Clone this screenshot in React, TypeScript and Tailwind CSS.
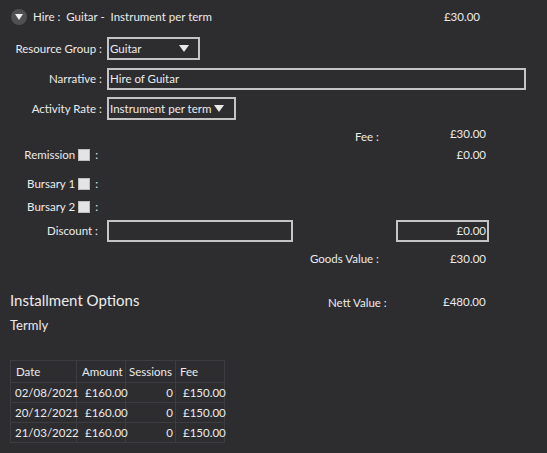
import React from "react"

const font = { fontFamily: 'Lato, "Noto Sans", sans-serif' }

function Caret() {
  return (
    <svg width="10" height="8" viewBox="0 0 10 8" className="shrink-0">
      <path d="M0 0 L10 0 L5 7 Z" fill="#e8e8e8" />
    </svg>
  )
}

function Check() {
  return <span className="mx-[3px] inline-block h-[12px] w-[12px] border border-[#bdbdbd] bg-[#e4e4e4]" />
}

function Label({ children }: { children: React.ReactNode }) {
  return <div className="flex w-[103px] shrink-0 items-center justify-end whitespace-nowrap pr-[1px]">{children}</div>
}

const rows = [
  ["02/08/2021", "£160.00", "0", "£150.00"],
  ["20/12/2021", "£160.00", "0", "£150.00"],
  ["21/03/2022", "£160.00", "0", "£150.00"],
]

export default function App() {
  return (
    <div className="h-[453px] w-[547px] overflow-hidden whitespace-nowrap bg-[#2d2d30] text-[11.5px] text-[#ebebeb]" style={font}>
      {/* header */}
      <div className="mt-[8px] flex h-[18px] items-center">
        <div className="ml-[11px] flex h-[16px] w-[16px] items-center justify-center rounded-full bg-[#505053]">
          <svg width="8" height="6" viewBox="0 0 8 6">
            <path d="M0 0 L8 0 L4 6 Z" fill="#f0f0f0" />
          </svg>
        </div>
        <span className="ml-[6px] w-[400px]">Hire :&nbsp; Guitar -&nbsp; Instrument per term</span>
        <span className="w-[47px] text-right">£30.00</span>
      </div>

      {/* resource group */}
      <div className="mt-[11px] flex h-[23px] items-center">
        <Label>Resource Group :</Label>
        <div className="ml-[4px] flex h-[23px] w-[93px] items-center justify-between border-2 border-[#c4c4c4] pl-[1px] pr-[9px]">
          <span>Guitar</span>
          <Caret />
        </div>
      </div>

      {/* narrative */}
      <div className="mt-[8px] flex h-[22px] items-center">
        <Label>Narrative :</Label>
        <div className="ml-[4px] flex h-[22px] w-[419px] items-center border-2 border-[#c4c4c4] pl-[1px]">
          Hire of Guitar
        </div>
      </div>

      {/* activity rate */}
      <div className="mt-[7px] flex h-[23px] items-center">
        <Label>Activity Rate :</Label>
        <div className="ml-[4px] flex h-[23px] w-[129px] items-center justify-between border-2 border-[#c4c4c4] pl-[1px] pr-[10px]">
          <span>Instrument per term</span>
          <Caret />
        </div>
      </div>

      {/* fee */}
      <div className="mt-[6px] flex h-[18px] items-center">
        <span className="w-[379px] pt-[3px] text-right">Fee :</span>
        <span className="w-[107px] pb-[3px] text-right">£30.00</span>
      </div>

      {/* remission */}
      <div className="mt-[2px] flex h-[18px] items-center">
        <Label>
          Remission <Check /> <span className="ml-[2px] mr-[4px]">:</span>
        </Label>
        <span className="ml-[276px] w-[107px] text-right">£0.00</span>
      </div>

      <div className="mt-[11px] flex h-[18px] items-center">
        <Label>
          Bursary 1 <Check /> <span className="ml-[2px] mr-[4px]">:</span>
        </Label>
      </div>

      <div className="mt-[5px] flex h-[18px] items-center">
        <Label>
          Bursary 2 <Check /> <span className="ml-[2px] mr-[4px]">:</span>
        </Label>
      </div>

      {/* discount */}
      <div className="mt-[4px] flex h-[22px] items-center">
        <Label>
          <span className="mr-[4px]">Discount :</span>
        </Label>
        <div className="ml-[4px] h-[22px] w-[186px] border-2 border-[#c4c4c4]" />
        <div className="ml-[103px] flex h-[22px] w-[93px] items-center justify-end border-2 border-[#c4c4c4] pr-[1px]">
          £0.00
        </div>
      </div>

      {/* goods value */}
      <div className="mt-[8px] flex h-[18px] items-center">
        <span className="w-[379px] text-right">Goods Value :</span>
        <span className="w-[107px] text-right">£30.00</span>
      </div>

      {/* installment options */}
      <div className="mt-[21px] flex h-[22px] items-center">
        <span className="ml-[10px] w-[318px] text-[15px]">Installment Options</span>
        <span className="pt-[5px]">Nett Value :</span>
        <span className="w-[99px] pt-[3px] text-right">£480.00</span>
      </div>

      <div className="mt-[6px] flex h-[18px] items-center">
        <span className="ml-[10px] text-[13px]">Termly</span>
      </div>

      {/* table */}
      <table className="ml-[10px] mt-[25px] w-[214px] table-fixed border-collapse">
        <colgroup>
          <col className="w-[66px]" />
          <col className="w-[49px]" />
          <col className="w-[50px]" />
          <col className="w-[49px]" />
        </colgroup>
        <thead>
          <tr className="h-[22px]">
            <th className="border border-[#3d3d41] pl-[5px] text-left font-normal">Date</th>
            <th className="border border-[#3d3d41] pl-[5px] text-left font-normal">Amount</th>
            <th className="border border-[#3d3d41] pl-[3px] text-left font-normal">Sessions</th>
            <th className="border border-[#3d3d41] pl-[4px] text-left font-normal">Fee</th>
          </tr>
        </thead>
        <tbody>
          {rows.map((r) => (
            <tr key={r[0]} className="h-[20px]">
              <td className="border border-[#3d3d41] pl-[4px]">{r[0]}</td>
              <td className="border border-[#3d3d41] pl-[8px]">{r[1]}</td>
              <td className="border border-[#3d3d41] pr-[2px] text-right">{r[2]}</td>
              <td className="border border-[#3d3d41] pl-[7px]">{r[3]}</td>
            </tr>
          ))}
        </tbody>
      </table>
    </div>
  )
}
